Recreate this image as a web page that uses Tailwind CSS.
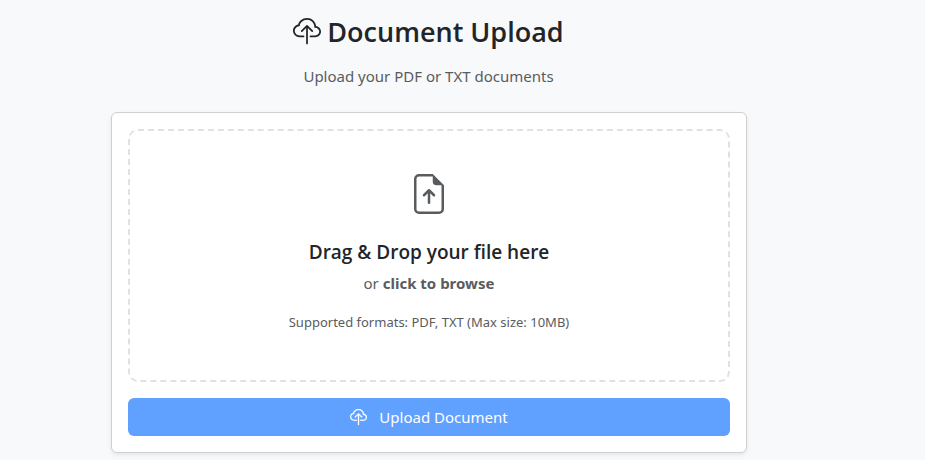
<!DOCTYPE html>
<html lang="en">
<head>
<meta charset="utf-8">
<meta name="viewport" content="width=device-width, initial-scale=1">
<title>Document Upload</title>
<script src="https://cdn.jsdelivr.net/npm/@tailwindcss/browser@4"></script>
</head>
<body class="min-h-screen bg-[#f8f9fa] font-['Noto_Sans','Open_Sans',sans-serif] text-[15px] text-[#212529]">
<svg class="hidden" aria-hidden="true">
  <symbol id="cloud-upload" viewBox="0 0 16 16">
    <path fill-rule="evenodd" d="M4.406 1.342A5.53 5.53 0 0 1 8 0c2.69 0 4.923 2 5.166 4.579C14.758 4.804 16 6.137 16 7.773 16 9.569 14.502 11 12.687 11H10a.5.5 0 0 1 0-1h2.688C13.979 10 15 8.988 15 7.773c0-1.216-1.02-2.228-2.313-2.228h-.5v-.5C12.188 2.825 10.328 1 8 1a4.53 4.53 0 0 0-2.941 1.1c-.757.652-1.153 1.438-1.153 2.055v.448l-.445.049C2.064 4.805 1 5.952 1 7.318 1 8.785 2.23 10 3.781 10H6a.5.5 0 0 1 0 1H3.781C1.708 11 0 9.366 0 7.318c0-1.763 1.266-3.223 2.942-3.593.143-.863.698-1.723 1.464-2.383"/>
    <path fill-rule="evenodd" d="M7.646 4.146a.5.5 0 0 1 .708 0l3 3a.5.5 0 0 1-.708.708L8.5 5.707V14.5a.5.5 0 0 1-1 0V5.707L5.354 7.854a.5.5 0 1 1-.708-.708z"/>
  </symbol>
</svg>
<main class="ml-[111px] mr-[179px] pt-[15px] pb-[7px]">
  <header class="text-center">
    <h1 class="flex items-center justify-center gap-1.5 font-['Open_Sans','Noto_Sans',sans-serif] text-[27px] leading-[34px] font-semibold">
      <svg class="size-7 fill-current" aria-hidden="true"><use href="#cloud-upload"/></svg>
      Document Upload
    </h1>
    <p class="mt-[15px] leading-6 text-[#595c5f]">Upload your PDF or TXT documents</p>
  </header>
  <form class="mt-6 -mr-px rounded-md border border-[#cfd0d1] bg-white p-4 shadow-[0_2px_4px_rgba(0,0,0,0.075)]" onsubmit="return false">
    <label for="file" class="flex cursor-pointer flex-col items-center rounded-[10px] border-2 border-dashed border-[#dee2e6] px-8 pt-[43px] pb-[47px] text-center text-[#595c5f]">
      <svg class="size-10 fill-current" viewBox="0 0 16 16" aria-hidden="true">
        <path d="M8.5 11.5a.5.5 0 0 1-1 0V7.707L6.354 8.854a.5.5 0 1 1-.708-.708l2-2a.5.5 0 0 1 .708 0l2 2a.5.5 0 0 1-.708.708L8.5 7.707z"/>
        <path d="M14 14V4.5L9.5 0H4a2 2 0 0 0-2 2v12a2 2 0 0 0 2 2h8a2 2 0 0 0 2-2M9.5 3A1.5 1.5 0 0 0 11 4.5h2V14a1 1 0 0 1-1 1H4a1 1 0 0 1-1-1V2a1 1 0 0 1 1-1h5.5z"/>
      </svg>
      <span class="mt-[26px] font-['Open_Sans','Noto_Sans',sans-serif] text-[19px] leading-6 font-semibold text-[#212529]">Drag &amp; Drop your file here</span>
      <span class="mt-[7px] leading-6">or <strong>click to browse</strong></span>
      <span class="mt-[17px] text-[13px] leading-[21px]">Supported formats: PDF, TXT (Max size: 10MB)</span>
      <input id="file" type="file" accept=".pdf,.txt" class="sr-only">
    </label>
    <button type="submit" class="mt-4 flex w-full items-center justify-center gap-3 rounded-md bg-[#60a0ff] px-3 py-[7px] leading-6 text-white">
      <svg class="size-[17px] fill-current stroke-current stroke-[0.3]" aria-hidden="true"><use href="#cloud-upload"/></svg>
      Upload Document
    </button>
  </form>
</main>
</body>
</html>
